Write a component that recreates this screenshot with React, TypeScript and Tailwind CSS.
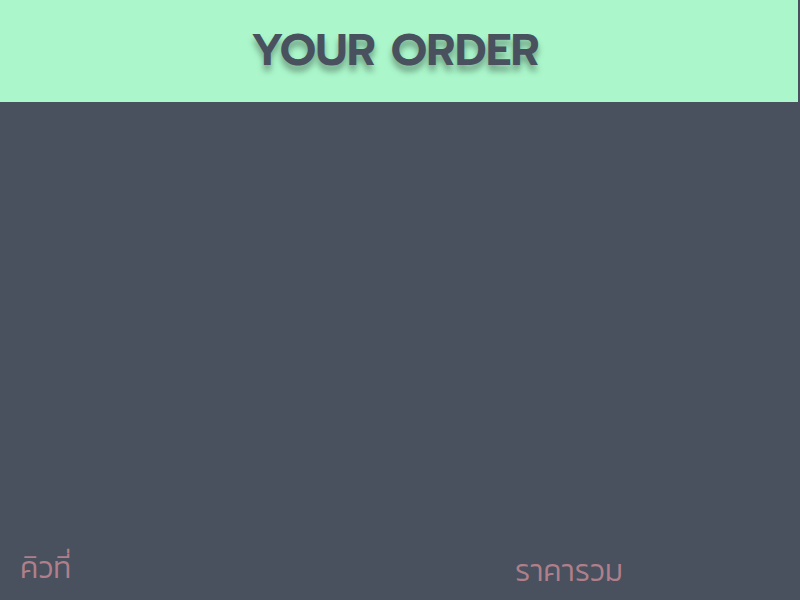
export default function App() {
  return (
    <div className="flex h-[600px] w-[800px] flex-col bg-[#48515d] font-['Kanit',sans-serif]">
      <header className="flex h-[102px] w-[798px] items-center justify-center bg-[#abf7cb]">
        <h1 className="-translate-x-1 font-['Prompt',sans-serif] text-[45px] font-semibold tracking-[-0.5px] text-[#48515d] [text-shadow:0_6px_6px_rgba(0,0,0,0.35)]">
          YOUR ORDER
        </h1>
      </header>
      <div className="flex-1" />
      <footer className="flex items-end pb-[10px] pl-5 text-[30px] font-light text-[#b07f8b]">
        <span className="w-[495px]">คิวที่</span>
        <span className="translate-y-[3px]">ราคารวม</span>
      </footer>
    </div>
  );
}
